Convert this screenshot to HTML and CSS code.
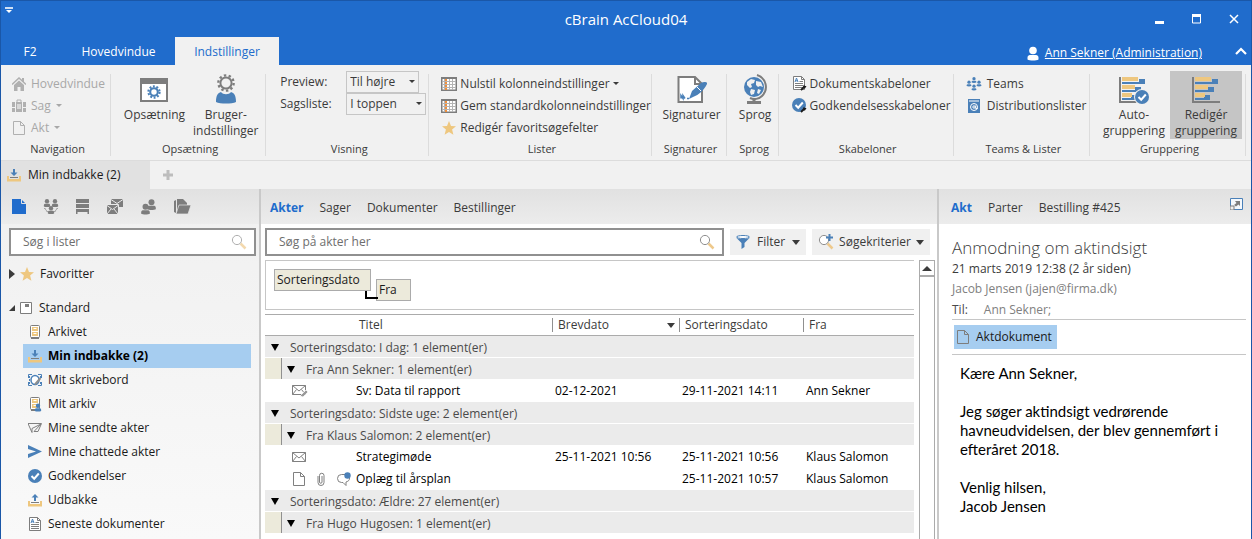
FILE: index.html
```html
<!DOCTYPE html>
<html lang="da">
<head>
<meta charset="utf-8">
<title>cBrain AcCloud04</title>
<link rel="stylesheet" href="styles.css">
</head>
<body>
<svg class="sprite" aria-hidden="true">
  <symbol id="doc" viewBox="0 0 14 14"><path d="M1.5.5h7l4 4v9h-11zM8.5.5v4h4" fill="none" stroke="currentColor"/></symbol>
  <symbol id="star" viewBox="0 0 14 14"><path d="M7 0l2 4.900 5 .3-3.900 3.300 1.300 5.200L7 10.900 2.600 13.700l1.300-5.200L0 5.200l5-.3z" fill="#eec77f"/></symbol>
  <symbol id="grid" viewBox="0 0 16 14"><path d="M.75.75h14.500v12.500H.75z" fill="#fff" stroke="#7d7d7d" stroke-width="1.500"/><path d="M0 0h16v2H0z" fill="#7d7d7d"/><path d="M1 4.500h14M1 7.500h14M1 10.500h14M3.500 2v11M8.500 2v11M11.500 2v11" stroke="#b4b4b4"/><path d="M5 2v11" stroke="#ef8f3c" stroke-width="2" stroke-dasharray="2 1"/></symbol>
  <symbol id="inbox" viewBox="0 0 14 14"><path d="M0 8h2v3h10V8h2v5.500H0z" fill="#eec77f"/><path d="M3 9.500h8" stroke="#7d7d7d"/><path d="M6 1h2v3.500h2.500L7 8 3.500 4.500H6z" fill="#4a80b8"/></symbol>
  <symbol id="outbox" viewBox="0 0 14 14"><path d="M0 8h2v3h10V8h2v5.500H0z" fill="#eec77f"/><path d="M3 9.500h8" stroke="#7d7d7d"/><path d="M6 8h2V4.500h2.500L7 1 3.500 4.500H6z" fill="#4a80b8"/></symbol>
  <symbol id="check" viewBox="0 0 14 14"><circle cx="7" cy="7" r="7" fill="#4a80b8"/><path d="M3.500 7l2.700 2.700L10.800 4.500" fill="none" stroke="#fff" stroke-width="2"/></symbol>
  <symbol id="lens" viewBox="0 0 16 16"><path d="M9.500 9.500l5 5" stroke="#eec98c" stroke-width="2.500"/><circle cx="6" cy="6" r="4.600" fill="#fff" stroke="#8f8f8f"/></symbol>
  <symbol id="textdoc" viewBox="0 0 14 14"><path d="M1.500.5h8l3 3v10h-11z" fill="#fff" stroke="#7d7d7d"/><path d="M9.500.5v3h3M7.500 5.500H11M3 7.500h8M3 9.500h8M3 11.500h8" fill="none" stroke="#7d7d7d"/><path d="M3 6l1.500-4L6 6M3.500 4.800h2" fill="none" stroke="#4a80b8"/></symbol>
  <symbol id="wrench" viewBox="0 0 7 7"><path d="M1 6L4 3" stroke="#1a1a1a" stroke-width="1.800"/><path d="M3 2L4.500.5v1.500L6.500 2 5 4.500H3.500z" fill="#1a1a1a"/></symbol>
  <symbol id="gear" viewBox="0 0 20 20"><circle cx="10" cy="10" r="5.400" fill="none" stroke="currentColor" stroke-width="3"/><circle cx="10" cy="10" r="8" fill="none" stroke="currentColor" stroke-width="3" stroke-dasharray="2.700 2.326"/></symbol>
  <symbol id="ring" viewBox="0 0 20 20"><circle cx="10" cy="10" r="6.200" fill="none" stroke="currentColor" stroke-width="2.200"/><circle cx="10" cy="10" r="8.500" fill="none" stroke="currentColor" stroke-width="2.600" stroke-dasharray="2.700 2.641"/></symbol>
  <symbol id="cabinet" viewBox="0 0 14 14"><rect x="2.500" y=".5" width="9" height="12" rx="1" fill="#fff" stroke="#7d7d7d"/><path d="M3 13h8" stroke="#7d7d7d" stroke-width="2"/><path d="M4 2h6v4H4zM4 7h6v4H4z" fill="#eec77f"/><path d="M5.500 3.500h3M5.500 8.500h3" stroke="#fff"/></symbol>
  <symbol id="person" viewBox="0 0 14 14"><circle cx="7" cy="4" r="3.800" fill="currentColor"/><path d="M1.500 13V11c0-3 3-2.500 5.500-2.500s5.500-.5 5.500 2.500v2c-2 1.300-9 1.300-11 0z" fill="currentColor"/></symbol>
  <symbol id="mail" viewBox="0 0 14 10"><path d="M.5.5h13v9H.5zM.5.5L7 6l6.500-5.500M.5 9.500l4-5M13.500 9.500l-4-5" fill="none" stroke="#808080"/></symbol>
  <symbol id="bars" viewBox="0 0 28 27"><path d="M1 0v26M0 25h28" stroke="#7d7d7d" stroke-width="2"/><path d="M20 2h6v5H3V5h17zM16 10h6v5H3v-2h13zM12 18h6v5H3v-2h9z" fill="#4a80b8"/><path d="M3 0h16v4H3zM3 8h13v4H3zM3 16h10v4H3z" fill="#eec77f"/></symbol>
  <symbol id="clip" viewBox="0 0 8 14"><path d="M1 4v6.500a3 3 0 006 0V3.500a2 2 0 00-4.500 0V10a1 1 0 002.500 0V4" fill="none" stroke="#808080"/></symbol>
</svg>

<div class="window">
  <header class="titlebar">
    <button class="quick" aria-label="Tilpas"><svg width="8" height="7" viewBox="0 0 8 7"><path d="M0 1h8" stroke="#cfe0f5" stroke-width="2"/><path d="M1 3h6L4 6z" fill="#fff"/></svg></button>
    <h1>cBrain AcCloud04</h1>
    <div class="winctl">
      <button aria-label="Minimer"><svg width="10" height="10"><path d="M0 8.500h9" stroke="#fff" stroke-width="3"/></svg></button>
      <button aria-label="Maksimer"><svg width="10" height="10"><path d="M.5 1v8h8V1" fill="none" stroke="#fff"/><path d="M0 1.500h9" stroke="#fff" stroke-width="3"/></svg></button>
      <button aria-label="Luk"><svg width="10" height="10"><path d="M1 1l8 8M9 1L1 9" stroke="#fff" stroke-width="1.500"/></svg></button>
    </div>
  </header>
  <nav class="menutabs">
    <button class="f2">F2</button>
    <button class="hv">Hovedvindue</button>
    <button class="on">Indstillinger</button>
    <div class="user">
      <svg width="14" height="15"><use href="#person"/></svg>
      <a href="#">Ann Sekner (Administration)</a>
      <button aria-label="Skjul bånd"><svg width="12" height="8"><path d="M1 7l5-5 5 5" fill="none" stroke="#fff" stroke-width="2.200"/></svg></button>
    </div>
  </nav>

  <section class="ribbon">
    <div class="group">
      <div class="list nav">
        <button disabled><svg width="14" height="14"><path d="M0 7.500L7 1l7 6.500" fill="none" stroke="#b0b0b0" stroke-width="1.500"/><path d="M2 8l5-4.500L12 8v6H8.500v-4h-3v4H2z" fill="#b0b0b0"/><path d="M11 1v4" stroke="#b0b0b0" stroke-width="2"/></svg>Hovedvindue</button>
        <button disabled><svg width="14" height="14"><path d="M0 3h3v5H0zM11 3h3v5h-3zM0 9h3v4H0zM11 9h3v4h-3zM4 3h6v10H4z" fill="#b0b0b0"/><path d="M5 3V1h4v2" fill="none" stroke="#b0b0b0"/><path d="M6 5v5M8 5v5" stroke="#fff"/></svg>Sag<i class="caret"></i></button>
        <button disabled><svg width="14" height="14"><use href="#doc"/></svg>Akt<i class="caret"></i></button>
      </div>
      <h2>Navigation</h2>
    </div>
    <div class="group">
      <div class="bigs">
        <button class="big"><svg width="28" height="30"><path d="M1 6h26v21H1z" fill="#fff" stroke="#7d7d7d" stroke-width="2"/><path d="M0 4h28v6H0z" fill="#7d7d7d"/><svg class="blue" x="7" y="11" width="14" height="14"><use href="#gear"/></svg></svg><span>Opsætning</span></button>
        <button class="big"><svg width="24" height="30"><svg class="grey" x="3" y="0" width="18" height="18"><use href="#ring"/></svg><path d="M2 28c0-7 2-9 5-10 2 3 8 3 10 0 3 1 5 3 5 10-4 2-16 2-20 0z" fill="#4a80b8"/></svg><span>Bruger-<br>indstillinger</span></button>
      </div>
      <h2>Opsætning</h2>
    </div>
    <div class="group">
      <div class="form">
        <label for="pv">Preview:</label><span class="sel"><select id="pv"><option>Til højre</option></select></span>
        <label for="sl">Sagsliste:</label><span class="sel wide"><select id="sl"><option>I toppen</option></select></span>
      </div>
      <h2>Visning</h2>
    </div>
    <div class="group">
      <div class="list lister">
        <button><svg width="16" height="14"><use href="#grid"/></svg>Nulstil kolonneindstillinger<i class="caret"></i></button>
        <button><svg width="16" height="14"><use href="#grid"/></svg>Gem standardkolonneindstillinger</button>
        <button><svg width="16" height="14"><use href="#star"/></svg>Redigér favoritsøgefelter</button>
      </div>
      <h2>Lister</h2>
    </div>
    <div class="group">
      <div class="bigs">
        <button class="big"><svg width="30" height="30"><path d="M1.500 3H18L25 10v18H1.500z" fill="#fff" stroke="#7d7d7d" stroke-width="2"/><path d="M18 3v7h7" fill="none" stroke="#7d7d7d" stroke-width="2"/><path d="M12 25l3-8 9-8c3-2 7-1 6 1-3 6-8 11-14 13z" fill="#4a80b8"/><path d="M20 13l4 4" stroke="#fff"/><path d="M4 24.500v-3l2 3v-3l2 3M10 24.500h2" stroke="#4a80b8" stroke-width="1.500" fill="none"/></svg><span>Signaturer</span></button>
      </div>
      <h2>Signaturer</h2>
    </div>
    <div class="group">
      <div class="bigs">
        <button class="big"><svg width="26" height="30"><circle cx="12" cy="13" r="10" fill="#4a80b8"/><path d="M5 8l4-3 4 1-1 3-3 1 1 3-2 1-3-3zM14 7l5 1 2 5-3-1-2 1-2-2zM9 15l4 1-1 4-3 1-1-3zM16 15l3 1-2 4-2-1z" fill="#f0f0f0"/><path d="M15 1a12.500 12.500 0 015 21c-3 3-8 4-12 2" fill="none" stroke="#7d7d7d" stroke-width="2"/><path d="M12 25v3M5 28.500h14" stroke="#7d7d7d" stroke-width="3"/></svg><span>Sprog</span></button>
      </div>
      <h2>Sprog</h2>
    </div>
    <div class="group">
      <div class="list skab">
        <button><svg width="15" height="15"><use href="#textdoc" width="14" height="14"/><use href="#wrench" x="8" y="8" width="7" height="7"/></svg>Dokumentskabeloner</button>
        <button><svg width="15" height="15"><use href="#check" width="14" height="14"/><use href="#wrench" x="8" y="8" width="7" height="7"/></svg>Godkendelsesskabeloner</button>
      </div>
      <h2>Skabeloner</h2>
    </div>
    <div class="group">
      <div class="list teams">
        <button><svg class="blue" width="16" height="14"><use href="#person" x="5" y="0" width="6" height="6"/><use href="#person" x="0" y="3" width="6" height="7"/><use href="#person" x="10" y="3" width="6" height="7"/><use href="#person" x="5" y="7" width="6" height="7"/></svg>Teams</button>
        <button><svg width="16" height="14"><path d="M2 0h12v14H2z" fill="#4a80b8"/><path d="M3 2h10" stroke="#fff"/><circle cx="8" cy="8" r="3.500" fill="none" stroke="#fff"/><circle cx="8" cy="8" r="1.200" fill="none" stroke="#fff"/><path d="M9.700 6.500v3h2" fill="none" stroke="#fff"/></svg>Distributionslister</button>
      </div>
      <h2>Teams &amp; Lister</h2>
    </div>
    <div class="group">
      <div class="bigs end">
        <button class="big"><svg width="30" height="30"><use href="#bars" y="3" width="28" height="27"/><circle cx="23" cy="23" r="8" fill="#f0f0f0"/><use href="#check" x="16" y="16" width="14" height="14"/></svg><span>Auto-<br>gruppering</span></button>
        <button class="big pressed"><svg width="28" height="30"><use href="#bars" y="3" width="28" height="27"/></svg><span>Redigér<br>gruppering</span></button>
      </div>
      <h2>Gruppering</h2>
    </div>
  </section>

  <nav class="doctabs">
    <button class="doctab"><svg width="14" height="14"><use href="#inbox"/></svg>Min indbakke (2)</button>
    <button class="plus" aria-label="Ny fane"><svg width="10" height="10"><path d="M5 0v10M0 5h10" stroke="#bdbdbd" stroke-width="3"/></svg></button>
  </nav>

  <main>
    <aside class="side">
      <div class="bar icons">
        <button aria-label="Lister"><svg width="14" height="16"><path d="M0 0h9l5 5v10H0z" fill="#206ccc"/><path d="M9.500 0v4.500H14" fill="none" stroke="#e4e4e4"/></svg></button>
        <button aria-label="Enheder"><svg width="16" height="16"><use href="#person" width="8" height="8"/><use href="#person" x="8" width="8" height="8"/><use href="#person" x="4" y="7" width="8" height="8"/><path d="M1.500 9l3 4M14.500 9l-3 4" stroke="currentColor" stroke-dasharray="2 1"/></svg></button>
        <button aria-label="Arkiv"><svg width="14" height="16"><path d="M0 0h13v4H0zM0 5h13v4H0zM0 10h13v3H0zM0 13h1.500v2H0zM11.500 13H13v2h-1.500z" fill="currentColor"/></svg></button>
        <button aria-label="Beskeder"><svg width="16" height="16"><path d="M4 0h12v8H4zM0 6h11v9H0z" fill="currentColor"/><path d="M4 .5l6 4 6-4M0 6.500l5.500 4 5.500-4M0 15l4-5M11 15l-4-5M0 5.500h11.500V15" fill="none" stroke="#e8e8e8"/></svg></button>
        <button aria-label="Brugere"><svg width="17" height="16"><use href="#person" x="6" y="0" width="11" height="11"/><use href="#person" x="0" y="4" width="11" height="12"/></svg></button>
        <button aria-label="Mapper"><svg width="17" height="16"><path d="M0 2l2-1v13l-2-1zM3 0h6l4 4v3H6l-3 6z" fill="currentColor"/><path d="M5 6h12l-3 9H2z" fill="currentColor" stroke="#e8e8e8" stroke-width=".7"/></svg></button>
      </div>
      <div class="search sidesearch"><input type="text" placeholder="Søg i lister" aria-label="Søg i lister"><svg class="pale" width="16" height="16"><use href="#lens"/></svg></div>
      <ul class="tree">
        <li class="root fav"><i class="tri"></i><svg width="14" height="14"><use href="#star"/></svg>Favoritter</li>
        <li class="root std"><i class="tri open"></i><svg width="13" height="12"><path d="M.5.5h11v11H.5z" fill="#fff" stroke="#7d7d7d"/><path d="M5 2v3h4V2z" fill="#7d7d7d"/></svg>Standard</li>
        <li><svg width="14" height="14"><use href="#cabinet"/></svg>Arkivet</li>
        <li class="sel-item"><svg width="14" height="14"><use href="#inbox"/></svg>Min indbakke (2)</li>
        <li><svg width="14" height="12"><path d="M.5 4V.5H4M10 .5h3.500V4M.5 8v3.500H4M10 11.500h3.500V8" fill="none" stroke="#4a80b8"/><path d="M1.500 2v8M12.500 2v3M12.500 8v2" stroke="#4a80b8" stroke-dasharray="2 1"/><ellipse cx="7" cy="6" rx="4" ry="4.500" fill="#fff" stroke="#4a80b8" stroke-width="1.500"/><path d="M7 10.500l5.500-6.500" stroke="#8f8f8f" stroke-width="2"/></svg>Mit skrivebord</li>
        <li><svg width="14" height="15"><use href="#cabinet" width="14" height="14"/><svg class="blue" x="6" y="6" width="8" height="9"><use href="#person"/></svg></svg>Mit arkiv</li>
        <li><svg width="14" height="10"><path d="M0 .5h13.500L10 8.500H6L13 1 4 5.500v4L2 5l-2-4.500" fill="none" stroke="#808080"/></svg>Mine sendte akter</li>
        <li><svg width="14" height="14"><path d="M0 0l14 6.500L0 13V9l8-2.500L0 4z" fill="#4a80b8"/></svg>Mine chattede akter</li>
        <li><svg width="14" height="14"><use href="#check"/></svg>Godkendelser</li>
        <li><svg width="14" height="14"><use href="#outbox"/></svg>Udbakke</li>
        <li><svg width="14" height="14"><use href="#textdoc"/></svg>Seneste dokumenter</li>
      </ul>
    </aside>

    <section class="center">
      <div class="bar views"><button class="on">Akter</button><button>Sager</button><button>Dokumenter</button><button>Bestillinger</button></div>
      <div class="tools">
        <div class="search"><input type="text" placeholder="Søg på akter her" aria-label="Søg på akter her"><svg width="16" height="16"><use href="#lens"/></svg></div>
        <button class="tool"><svg width="14" height="14"><ellipse cx="7" cy="2" rx="6.500" ry="1.500" fill="#fff" stroke="#4a80b8"/><path d="M0 2.500c3 2 11 2 14 0L8.500 8v4L5.500 14V8z" fill="#4a80b8"/></svg>Filter<i class="caret dark"></i></button>
        <button class="tool"><svg width="16" height="16"><use href="#lens"/><path d="M8 3.500h7M11.500 0v7" stroke="#4a80b8" stroke-width="2"/></svg>Søgekriterier<i class="caret dark"></i></button>
      </div>
      <div class="content">
        <div class="results">
          <div class="grouping"><button class="chip first">Sorteringsdato</button><button class="chip second">Fra</button></div>
          <table>
            <colgroup><col class="c-ico"><col><col class="c-brev"><col class="c-sort"><col class="c-fra"></colgroup>
            <thead><tr><th></th><th>Titel</th><th><span class="hd">Brevdato<i class="caret dark"></i></span></th><th><span class="hd">Sorteringsdato</span></th><th><span class="hd">Fra</span></th></tr></thead>
            <tbody>
              <tr class="g1"><td colspan="5"><div><i class="down"></i>Sorteringsdato: I dag: 1 element(er)</div></td></tr>
              <tr class="g2"><td colspan="5"><div><i class="down"></i>Fra Ann Sekner: 1 element(er)</div></td></tr>
              <tr><td><div class="ics"><svg width="16" height="12"><use href="#mail" width="14" height="10"/><path d="M8 11l6-6 2 2-5 5z" fill="#999" stroke="#fff" stroke-width=".7"/></svg></div></td><td>Sv: Data til rapport</td><td>02-12-2021</td><td>29-11-2021 14:11</td><td>Ann Sekner</td></tr>
              <tr class="g1"><td colspan="5"><div><i class="down"></i>Sorteringsdato: Sidste uge: 2 element(er)</div></td></tr>
              <tr class="g2"><td colspan="5"><div><i class="down"></i>Fra Klaus Salomon: 2 element(er)</div></td></tr>
              <tr><td><div class="ics"><svg width="14" height="10"><use href="#mail"/></svg></div></td><td>Strategimøde</td><td>25-11-2021 10:56</td><td>25-11-2021 10:56</td><td>Klaus Salomon</td></tr>
              <tr><td><div class="ics"><svg width="14" height="14"><use href="#doc"/></svg><svg width="14" height="14"><use href="#clip"/></svg><svg width="15" height="14"><path d="M9 2.500H5.500a4 4 0 000 8H7l3 3v-3.500c3-1 3.500-2 3.500-4" fill="none" stroke="#808080"/><circle cx="11.500" cy="3.500" r="3.200" fill="#4a80b8"/></svg></div></td><td>Oplæg til årsplan</td><td></td><td>25-11-2021 10:57</td><td>Klaus Salomon</td></tr>
              <tr class="g1"><td colspan="5"><div><i class="down"></i>Sorteringsdato: Ældre: 27 element(er)</div></td></tr>
              <tr class="g2"><td colspan="5"><div><i class="down"></i>Fra Hugo Hugosen: 1 element(er)</div></td></tr>
              <tr><td><div class="ics last"><svg width="14" height="14"><circle cx="7" cy="7" r="5.500" fill="#fff" stroke="#4a80b8" stroke-width="3"/></svg><svg width="14" height="14"><use href="#clip"/></svg><svg width="14" height="14"><circle cx="7" cy="7" r="6" fill="none" stroke="#808080"/><circle cx="7" cy="4" r="2" fill="none" stroke="#808080"/></svg></div></td><td></td><td></td><td></td><td></td></tr>
            </tbody>
          </table>
        </div>
        <div class="scroll"><button aria-label="Rul op"><i class="up"></i></button></div>
      </div>
    </section>

    <article class="preview">
      <div class="bar views"><button class="on">Akt</button><button>Parter</button><button>Bestilling #425</button><button class="pop" aria-label="Åbn i nyt vindue"><svg width="13" height="12"><path d="M.5.5h12v11H.5z" fill="#f4f8fc" stroke="#4a80b8"/><path d="M0 8h4v4H0z" fill="#eee" stroke="#7d7d7d"/><path d="M5 3h5v5L8.500 6.500 6 8.500 4 7l2.500-2z" fill="#7d7d7d"/></svg></button></div>
      <div class="message">
        <h3>Anmodning om aktindsigt</h3>
        <p class="date">21 marts 2019 12:38 (2 år siden)</p>
        <p class="from">Jacob Jensen (jajen@firma.dk)</p>
        <p class="to"><span>Til:</span>Ann Sekner;</p>
        <div class="attach"><button><svg width="14" height="14"><use href="#doc"/></svg>Aktdokument</button></div>
        <div class="body">
          <p>Kære Ann Sekner,</p>
          <p>Jeg søger aktindsigt vedrørende havneudvidelsen, der blev gennemført i efteråret 2018.</p>
          <p>Venlig hilsen,<br>Jacob Jensen</p>
        </div>
      </div>
    </article>
  </main>
</div>
</body>
</html>
```
FILE: styles.css
```css
* { box-sizing: border-box; }
html, body { margin: 0; height: 100%; }
body { font: 12px/16px "Open Sans", "Noto Sans", sans-serif; color: #3b3b3b; overflow: hidden; }
button { border: 0; margin: 0; padding: 0; background: none; font: inherit; color: inherit; white-space: nowrap; }
h1, h2, h3, p, ul { margin: 0; padding: 0; font-weight: 400; }
svg { flex: none; }
.sprite { display: none; }
.blue { color: #4a80b8; }
.grey { color: #7d7d7d; }

.window { height: 100vh; display: flex; flex-direction: column; border: 1px solid #1a57a8; border-bottom: 0; background: #f0f0f0; overflow: hidden; }
.titlebar { flex: none; height: 36px; background: #206ccc; color: #fff; display: grid; grid-template-columns: 1fr auto 1fr; align-items: center; }
.titlebar h1 { font-size: 15px; line-height: 36px; }
.quick { justify-self: start; align-self: start; padding: 6px 4px; line-height: 0; }
.winctl { justify-self: end; display: flex; gap: 27px; padding-right: 12px; }
.winctl button { line-height: 0; }

.menutabs { flex: none; height: 28px; background: #206ccc; color: #fff; display: flex; align-items: stretch; }
.menutabs > button { padding-top: 2px; }
.f2 { width: 58px; }
.menutabs .hv { width: 116px; padding-left: 3px; }
.menutabs .on { width: 104px; background: #f1f1f1; color: #206ccc; }
.user { margin-left: auto; display: flex; align-items: center; padding-top: 4px; gap: 5px; }
.user a { color: #fff; }
.user button { padding: 0 4px 5px 28px; line-height: 0; }

.ribbon { flex: none; height: 96px; padding-right: 5px; background: #f1f1f1; border-bottom: 1px solid #dcdcdc; display: grid; grid-template-columns: 110fr 155fr 163fr 222fr 75fr 52fr 175fr 136fr 156fr; }
.group { min-width: 0; margin: 9px 0 4px; border-right: 1px solid #dcdcdc; display: flex; flex-direction: column; justify-content: space-between; }
.group h2 { font-size: 11px; line-height: 14px; text-align: center; padding-left: 4px; }
.list { display: flex; flex-direction: column; align-items: flex-start; }
.list button { display: flex; align-items: center; gap: 5px; height: 22px; padding-bottom: 3px; }
.nav { padding-left: 11px; }
.nav button { color: #a8a8a8; }
.nav svg { color: #b0b0b0; }
.lister { padding-left: 12px; }
.skab { padding-left: 13px; }
.lister button, .skab button { gap: 3px; }
.teams { padding-left: 12px; }
.caret { width: 0; height: 0; border: 3px solid transparent; border-top-color: currentColor; border-bottom: 0; }
.caret.dark { border-width: 5px 4px 0; border-top-color: #3b3b3b; }
.bigs { display: flex; justify-content: center; gap: 8px; padding-left: 6px; }
.big { display: flex; flex-direction: column; align-items: center; }
.big span { padding-top: 3px; }
.bigs.end { justify-content: flex-end; gap: 0; padding: 0 3px 0 0; margin-top: -3px; }
.bigs.end .big { width: 72px; padding-top: 3px; }
.pressed { background: #c5c5c5; }
.form { display: grid; grid-template-columns: 66px auto; justify-content: start; justify-items: start; padding: 0 0 0 14px; margin-top: -3px; }
.form label { line-height: 22px; }
.sel { position: relative; width: 73px; height: 22px; }
.sel.wide { width: 80px; }
.sel select { width: 100%; height: 22px; appearance: none; border: 1px solid #c6c6c6; border-radius: 0; background: transparent; font: inherit; color: #3b3b3b; padding: 0 3px; }
.sel::after { content: ""; position: absolute; right: 4px; top: 9px; border: 3px solid transparent; border-top-color: #3b3b3b; border-bottom: 0; pointer-events: none; }

.doctabs { flex: none; height: 28px; display: flex; background: #f1f1f1; }
.doctab { width: 149px; background: #e1e1e1; color: #1a1a1a; display: flex; align-items: center; gap: 7px; padding-left: 6px; }
.plus { padding: 0 13px; line-height: 0; }

main { flex: 1; min-height: 0; display: grid; grid-template-columns: 260px minmax(0, 1fr) 312px; }
.bar { height: 35px; flex: none; background: linear-gradient(#e1e1e1, #ececec); display: flex; align-items: center; }
.side { border-right: 2px solid #c9c9c9; background: linear-gradient(#f0f0f0, #f9f9f9); display: flex; flex-direction: column; min-height: 0; overflow: hidden; }
.icons { padding-left: 11px; gap: 17px; color: #7d7d7d; }
.icons button { line-height: 0; }
.search { display: flex; align-items: center; height: 28px; border: 2px solid #909090; background: #fff; padding-right: 7px; }
.search input { flex: 1; min-width: 0; border: 0; outline: 0; background: none; font: inherit; padding: 0 12px; color: #3b3b3b; }
.search input::placeholder { color: #6e6e6e; opacity: 1; }
.sidesearch { flex: none; margin: 4px 3px 0 8px; }
.pale { opacity: .7; }
.tree { list-style: none; color: #1a1a1a; }
.tree li { display: flex; align-items: center; height: 24px; gap: 6px; margin: 0 8px 0 22px; padding-left: 5px; }
.tree .root { margin-left: 6px; padding-left: 2px; gap: 6px; }
.tree .root .tri { margin-right: -1px; }
.tree .fav { margin-top: 6px; }
.tree .std { margin-top: 10px; }
.tree .sel-item { background: #a6cdf0; font-weight: 700; color: #000; }
.tri { width: 6px; height: 10px; background: #3b3b3b; clip-path: polygon(0 0, 100% 50%, 0 100%); }
.tri.open { height: 6px; clip-path: polygon(100% 0, 100% 100%, 0 100%); }

.center { background: #fff; border-right: 2px solid #c9c9c9; display: flex; flex-direction: column; min-height: 0; overflow: hidden; }
.views { gap: 16px; padding: 2px 10px 0 9px; }
.views .on { color: #206ccc; font-weight: 700; }
.tools { display: flex; gap: 6px; padding: 4px 7px 4px 4px; align-items: center; }
.tools .search { flex: 1; }
.tool { height: 26px; min-width: 76px; background: #f0f0f0; display: flex; align-items: center; justify-content: space-between; gap: 5px; padding: 0 6px; }
.content { flex: 1; min-height: 0; display: flex; padding: 0 2px 0 4px; gap: 5px; }
.results { flex: 1; min-width: 0; overflow: hidden; }
.grouping { height: 50px; border: 1px solid #c6c6c6; border-right: 0; display: flex; align-items: flex-start; gap: 5px; padding: 8px; }
.chip { height: 22px; border: 1px solid #ababab; background: #eceadb; color: #1a1a1a; text-align: left; padding: 0 2px; }
.first { width: 97px; }
.second { width: 35px; margin-top: 10px; position: relative; }
.second::before { content: ""; position: absolute; left: -12px; top: 11px; width: 11px; height: 6px; border: solid #000; border-width: 0 0 2px 2px; }
table { width: 100%; margin-top: 4px; border-collapse: separate; border-spacing: 0; table-layout: fixed; }
.c-ico { width: 88px; }
.c-brev { width: 127px; }
.c-sort { width: 124px; }
.c-fra { width: 111px; }
th { height: 22px; padding: 0 0 0 6px; text-align: left; font-weight: 400; border: solid #ababab; border-width: 1px 0; }
th:nth-child(n+3) { padding-left: 0; }
.hd { display: flex; align-items: center; justify-content: space-between; height: 14px; border-left: 1px solid #909090; padding: 0 4px 0 5px; }
td { height: 22px; padding: 0 0 0 3px; color: #000; white-space: nowrap; }
.g1 td, .g2 td { background: #ebebeb; border-bottom: 1px solid #fff; color: #4a4a4a; padding: 0; }
.g1 div, .g2 div { display: flex; align-items: center; height: 21px; padding-top: 2px; }
.g1 div { padding-left: 6px; gap: 11px; }
.g2 div { padding-left: 5px; gap: 11px; margin-left: 16px; border-left: 1px solid #909090; }
.g2 td { background: linear-gradient(90deg, #eceadb 16px, #ebebeb 16px); }
.down { border: 4px solid transparent; border-top: 7px solid #000; border-bottom: 0; }
.ics { display: flex; align-items: center; gap: 8px; padding-left: 24px; color: #808080; }
.last { padding-top: 2px; }
.scroll { width: 16px; border: 1px solid #ababab; border-bottom: 0; }
.scroll button { width: 100%; height: 16px; border-bottom: 2px solid #ababab; display: grid; place-items: center; }
.up { border: 5px solid transparent; border-bottom-color: #3b3b3b; border-top: 0; }

.preview { background: #fff; min-height: 0; overflow: hidden; }
.preview .views { padding-left: 12px; padding-right: 8px; }
.pop { margin-left: auto; line-height: 0; padding-bottom: 8px; }
.message { padding: 12px 5px 0 13px; }
h3 { font-size: 17px; line-height: 24px; font-weight: 300; }
.date, .from { line-height: 18px; height: 20px; }
.from { color: #808080; }
.preview .to { color: #808080; display: flex; gap: 16px; height: 20px; padding-top: 2px; border-bottom: 1px solid #c6c6c6; }
.to span { color: #4a4a4a; }
.attach { padding: 5px 2px; border-bottom: 1px solid #c6c6c6; }
.attach button { height: 24px; background: #a6cdf0; color: #1a1a1a; display: flex; align-items: center; gap: 6px; padding: 0 5px 0 2px; }
.attach svg { color: #7d7d7d; }
.body { font: 15px/19px Lato, "Open Sans", sans-serif; color: #000; padding: 9px 8px; display: flex; flex-direction: column; gap: 19px; }
```
